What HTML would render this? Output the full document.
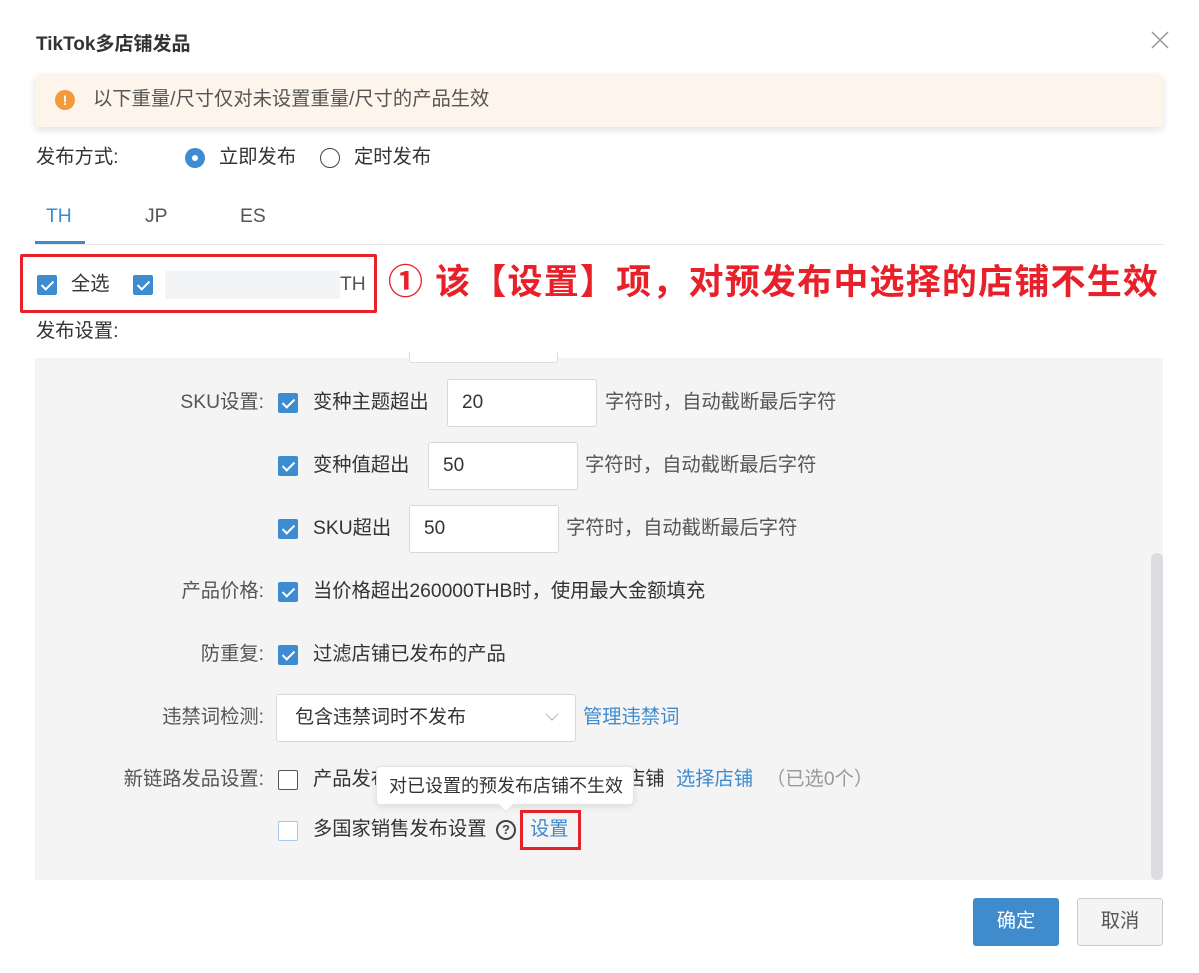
<!DOCTYPE html>
<html><head><meta charset="utf-8"><style>
*{margin:0;padding:0;box-sizing:border-box}
body{width:1199px;height:973px;background:#fff;position:relative;overflow:hidden;font-family:"Liberation Sans","Noto Sans CJK SC",sans-serif;color:#333;font-size:19.3px}
.a{position:absolute;white-space:nowrap;line-height:24px}
.cb{position:absolute;width:20px;height:20px;background:#3d8bd0;border-radius:2px}
.cb::after{content:"";position:absolute;left:7px;top:3px;width:5px;height:10px;border:solid #fff;border-width:0 2px 2px 0;transform:rotate(45deg)}
.ub{position:absolute;width:20px;height:20px;background:#fff;border:1px solid #555;border-radius:2px}
.in{position:absolute;height:48px;background:#fff;border:1px solid #d8d8d8;border-radius:3px;padding-left:14px;line-height:46px;font-size:19px}
.lbl{position:absolute;right:935px;white-space:nowrap;line-height:24px;color:#555}
.blue{color:#3d8bd0}
</style></head><body>
<div class="a" style="left:36px;top:33px;font-weight:bold;font-size:19px;color:#333">TikTok多店铺发品</div>
<svg style="position:absolute;left:1151px;top:31px" width="18" height="18"><path d="M1 1L17 17M17 1L1 17" stroke="#999" stroke-width="1.5"/></svg>
<div style="position:absolute;left:35px;top:74px;width:1128px;height:53px;background:#fdf4ec;border-radius:4px;box-shadow:0 3px 8px rgba(0,0,0,.12)"></div>
<div style="position:absolute;left:55px;top:90px;width:20px;height:20px;border-radius:50%;background:#f39a3c;color:#fff;font-size:14px;font-weight:bold;text-align:center;line-height:20px">!</div>
<div class="a" style="left:93px;top:88px;color:#555">以下重量/尺寸仅对未设置重量/尺寸的产品生效</div>
<div class="a" style="left:36px;top:146px">发布方式:</div>
<div style="position:absolute;left:185px;top:148px;width:20px;height:20px;border-radius:50%;background:#3d8bd0"><div style="position:absolute;left:7px;top:7px;width:6px;height:6px;border-radius:50%;background:#fff"></div></div>
<div class="a" style="left:219px;top:146px">立即发布</div>
<div style="position:absolute;left:320px;top:148px;width:20px;height:20px;border-radius:50%;border:1px solid #444;background:#fff"></div>
<div class="a" style="left:354px;top:146px">定时发布</div>
<div class="a blue" style="left:46px;top:205px">TH</div>
<div class="a" style="left:145px;top:205px;color:#555">JP</div>
<div class="a" style="left:240px;top:205px;color:#555">ES</div>
<div style="position:absolute;left:35px;top:244px;width:1128px;height:1px;background:#e8e8e8"></div>
<div style="position:absolute;left:35px;top:241px;width:50px;height:3px;background:#3d8bd0"></div>
<div style="position:absolute;left:20px;top:254px;width:357px;height:59px;border:3px solid #e8202a;border-radius:2px"></div>
<div class="cb" style="left:37px;top:275px"></div>
<div class="a" style="left:71px;top:273px">全选</div>
<div class="cb" style="left:133px;top:275px"></div>
<div style="position:absolute;left:165px;top:271px;width:175px;height:28px;background:#f3f4f6"></div>
<div class="a" style="left:340px;top:273px;color:#555">TH</div>
<div class="a" style="left:388px;top:263px;color:#e8202a;font-weight:bold;font-size:35px;line-height:40px;letter-spacing:1.2px">① 该【设置】项，对预发布中选择的店铺不生效</div>
<div class="a" style="left:36px;top:320px">发布设置:</div>
<div style="position:absolute;left:35px;top:358px;width:1128px;height:522px;background:#f4f4f4"></div>
<div style="position:absolute;left:409px;top:352px;width:149px;height:11px;background:#fff;border:1px solid #ddd;border-top:none;border-radius:0 0 3px 3px"></div>
<div style="position:absolute;left:1151px;top:553px;width:12px;height:327px;background:#dcdde0;border-radius:6px"></div>
<div class="lbl" style="top:391px">SKU设置:</div>
<div class="cb" style="left:278px;top:393px"></div>
<div class="a" style="left:313px;top:391px">变种主题超出</div>
<div class="in" style="left:447px;top:379px;width:150px">20</div>
<div class="a" style="left:605px;top:391px;color:#555">字符时，自动截断最后字符</div>
<div class="cb" style="left:278px;top:456px"></div>
<div class="a" style="left:313px;top:454px">变种值超出</div>
<div class="in" style="left:428px;top:442px;width:150px">50</div>
<div class="a" style="left:585px;top:454px;color:#555">字符时，自动截断最后字符</div>
<div class="cb" style="left:278px;top:519px"></div>
<div class="a" style="left:313px;top:517px">SKU超出</div>
<div class="in" style="left:409px;top:505px;width:150px">50</div>
<div class="a" style="left:566px;top:517px;color:#555">字符时，自动截断最后字符</div>
<div class="lbl" style="top:580px">产品价格:</div>
<div class="cb" style="left:278px;top:582px"></div>
<div class="a" style="left:313px;top:580px">当价格超出260000THB时，使用最大金额填充</div>
<div class="lbl" style="top:643px">防重复:</div>
<div class="cb" style="left:278px;top:645px"></div>
<div class="a" style="left:313px;top:643px">过滤店铺已发布的产品</div>
<div class="lbl" style="top:706px">违禁词检测:</div>
<div class="in" style="left:276px;top:694px;width:300px;padding-left:18px">包含违禁词时不发布</div>
<svg style="position:absolute;left:545px;top:712px" width="14" height="10"><path d="M1 2L7 8L13 2" fill="none" stroke="#bbb" stroke-width="1.2"/></svg>
<div class="a blue" style="left:583px;top:706px">管理违禁词</div>
<div class="lbl" style="top:768px">新链路发品设置:</div>
<div class="ub" style="left:278px;top:770px"></div>
<div class="a" style="left:313px;top:768px">产品发布</div>
<div class="a" style="left:626px;top:768px">店铺</div>
<div class="a blue" style="left:676px;top:768px">选择店铺</div>
<div class="a" style="left:766px;top:768px;color:#999">（已选0个）</div>
<div style="position:absolute;left:376px;top:766px;width:258px;height:39px;background:#fff;border:1px solid #e4e4e4;border-radius:5px;box-shadow:0 2px 8px rgba(0,0,0,.1)"></div>
<div style="position:absolute;left:500px;top:798px;width:12px;height:12px;background:#fff;transform:rotate(45deg);border-right:1px solid #e4e4e4;border-bottom:1px solid #e4e4e4"></div>
<div class="a" style="left:389px;top:774px;font-size:18px">对已设置的预发布店铺不生效</div>
<div class="ub" style="left:278px;top:821px;border-color:#a8c8e8"></div>
<div class="a" style="left:313px;top:818px">多国家销售发布设置</div>
<div style="position:absolute;left:496px;top:820px;width:20px;height:20px;border:2px solid #444;border-radius:50%;font-size:13px;font-weight:bold;text-align:center;line-height:16px;color:#444">?</div>
<div style="position:absolute;left:520px;top:810px;width:61px;height:40px;border:3px solid #e8202a"></div>
<div class="a blue" style="left:530px;top:818px">设置</div>
<div style="position:absolute;left:973px;top:898px;width:86px;height:48px;background:#3f8bcc;border-radius:3px;color:#fff;text-align:center;line-height:48px">确定</div>
<div style="position:absolute;left:1077px;top:898px;width:86px;height:48px;background:#f4f4f4;border:1px solid #ccc;border-radius:3px;color:#555;text-align:center;line-height:46px">取消</div>
</body></html>
